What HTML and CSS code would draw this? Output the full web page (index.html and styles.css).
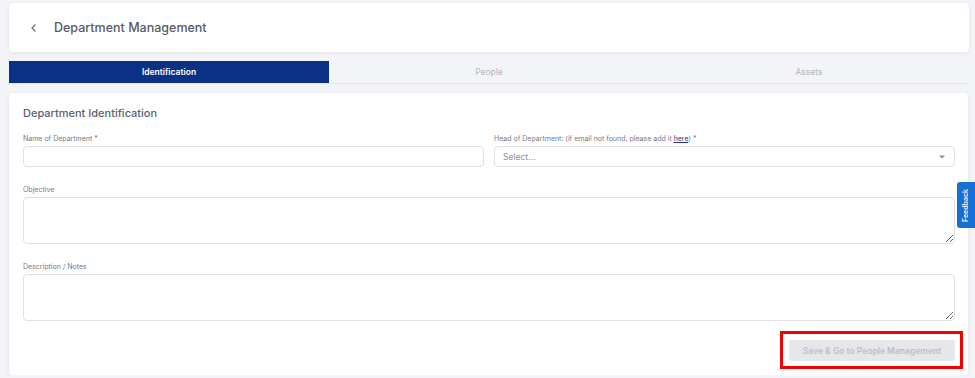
FILE: index.html
```html
<!DOCTYPE html>
<html lang="en-US">
  <head>
    <link rel="stylesheet" href="styles.css">
  </head>
  <body>
    <div class="page">
      <div class="header">
        <svg class="back" width="8" height="10" viewBox="0 0 8 10">
          <path d="M5.5 1.5 L2 5 L5.5 8.5" fill="none" stroke="#6b6f7c" stroke-width="1.2"/>
        </svg>
        <h1>Department Management</h1>
      </div>

      <div class="tabs">
        <div class="tab active">Identification</div>
        <div class="tab">People</div>
        <div class="tab">Assets</div>
      </div>

      <div class="card">
        <h2>Department Identification</h2>
        <div class="row two">
          <div class="field">
            <label>Name of Department *</label>
            <input type="text" class="input">
          </div>
          <div class="field">
            <label>Head of Department: (if email not found, please add it <a href="#">here</a>) *</label>
            <div class="select">
              <span>Select...</span>
              <svg width="6" height="4" viewBox="0 0 6 4"><path d="M0 0.5 H6 L3 3.5 Z" fill="#8a8e99"/></svg>
            </div>
          </div>
        </div>
        <div class="field">
          <label>Objective</label>
          <textarea class="area"></textarea>
        </div>
        <div class="field last">
          <label>Description / Notes</label>
          <textarea class="area"></textarea>
        </div>
        <div class="actions">
          <div class="highlight">
            <button class="save" disabled>Save &amp; Go to People Management</button>
          </div>
        </div>
      </div>
    </div>
    <div class="feedback">Feedback</div>
  </body>
</html>
```

FILE: styles.css
```css
body {
  margin: 0;
  background: #f3f4f8;
  font-family: Inter, "Noto Sans", sans-serif;
  color: #5a5e6d;
}

.page {
  padding: 3px 6px 0 9px;
}

.header {
  display: flex;
  align-items: center;
  height: 49px;
  padding-left: 21px;
  background: #fff;
  border-radius: 4px;
  box-shadow: 0 1px 4px rgba(30, 40, 70, 0.08);
}

.back {
  margin-right: 16px;
}

h1 {
  margin: 0;
  font-size: 12.5px;
  font-weight: 500;
  color: #565b6a;
}

.tabs {
  display: grid;
  grid-template-columns: 320px 320px 320px;
  height: 22px;
  margin-top: 9px;
  border-bottom: 1px solid #e2e4ea;
}

.tab {
  display: flex;
  align-items: center;
  justify-content: center;
  font-size: 8.5px;
  color: #b3b6bf;
}

.tab.active {
  background: #0a3183;
  color: #fff;
  font-weight: 600;
}

.card {
  margin-top: 9px;
  margin-right: 1px;
  padding: 13px 13px 6px 14px;
  background: #fff;
  border-radius: 4px;
  box-shadow: 0 1px 4px rgba(30, 40, 70, 0.08);
}

h2 {
  margin: 0 0 15px;
  font-size: 11px;
  line-height: 14px;
  font-weight: 500;
  color: #5c6070;
}

.row.two {
  display: grid;
  grid-template-columns: 1fr 1fr;
  gap: 10px;
}

.field {
  display: flex;
  flex-direction: column;
  margin-bottom: 19px;
}

.field.last {
  margin-bottom: 0;
}

label {
  display: block;
  font-size: 7px;
  line-height: 8px;
  color: #757987;
  margin-bottom: 3px;
}

label a {
  color: #26337a;
}

.input,
.select,
.area {
  display: block;
  box-sizing: border-box;
  margin: 0;
  border: 1px solid #dfe1e6;
  border-radius: 4px;
  background: #fff;
  font-family: inherit;
}

.input {
  height: 21px;
}

.select {
  display: flex;
  align-items: center;
  justify-content: space-between;
  height: 21px;
  padding: 0 9px 0 8px;
  font-size: 8.5px;
  color: #8d919c;
}

.area {
  height: 47px;
  resize: vertical;
}

.actions {
  display: flex;
  justify-content: flex-end;
  margin-top: 10px;
}

.highlight {
  border: 3px solid #f00000;
  padding: 6px 5px 5px 6px;
  margin-right: -8px;
}

.save {
  display: block;
  width: 166px;
  height: 21px;
  border: none;
  border-radius: 3px;
  background: #e6e7ea;
  color: #bcbec5;
  font-family: inherit;
  font-size: 8.5px;
  font-weight: 600;
}

.feedback {
  position: fixed;
  right: 0;
  top: 182px;
  width: 18px;
  height: 46px;
  background: #1470d4;
  color: #fff;
  font-size: 7px;
  font-weight: 600;
  writing-mode: vertical-rl;
  transform: rotate(180deg);
  border-radius: 0 3px 3px 0;
  display: flex;
  align-items: center;
  justify-content: center;
}
```
